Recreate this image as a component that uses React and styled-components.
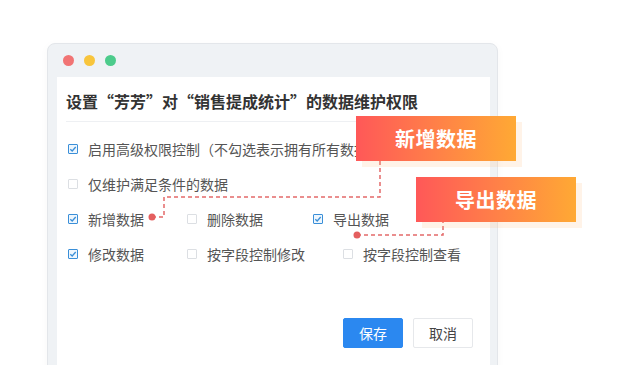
import React from "react";
import styled, { createGlobalStyle } from "styled-components";

const GlobalStyle = createGlobalStyle`
    html, body {
        margin: 0;
        padding: 0;
        background: #ffffff;
        font-family: "Noto Sans CJK SC", "Noto Sans", sans-serif;
    }
`;

const Page = styled.div`
    position: relative;
    width: 630px;
    height: 365px;
    overflow: hidden;
    padding: 43px 0 0 47px;
    box-sizing: border-box;
`;

const Window = styled.div`
    width: 451px;
    height: 340px;
    box-sizing: border-box;
    background: #eff2f5;
    border: 1px solid #e3e6ea;
    border-radius: 8px 8px 0 0;
    box-shadow: 0 2px 10px rgba(0, 0, 0, 0.03);
    display: flex;
    flex-direction: column;
    padding: 0 7px 0 9px;
`;

const TitleBar = styled.div`
    height: 33px;
    display: flex;
    align-items: center;
    gap: 10px;
    padding-left: 6px;
`;

const Dot = styled.span`
    width: 11px;
    height: 11px;
    border-radius: 50%;
    background: ${(p) => p.color};
`;

const Panel = styled.div`
    flex: 1;
    background: #ffffff;
    padding: 0 17px 0 9px;
    overflow: hidden;
`;

const Title = styled.div`
    font-size: 16px;
    font-weight: bold;
    color: #333333;
    line-height: 20px;
    padding: 14px 0 10px;
    border-bottom: 1px solid #eef0f3;
    white-space: nowrap;
`;

const List = styled.div`
    padding: 9px 0 0 2px;
`;

const Row = styled.div`
    height: 35px;
    display: flex;
    align-items: center;
    white-space: nowrap;
`;

const Item = styled.label`
    display: flex;
    align-items: center;
    flex: none;
    width: ${(p) => (p.w ? `${p.w}px` : "auto")};
    overflow: hidden;
    font-size: 14px;
    color: #555555;
`;

const Box = styled.span`
    flex: none;
    width: 10px;
    height: 10px;
    box-sizing: border-box;
    margin-right: 10px;
    border: 1px solid ${(p) => (p.checked ? "#3a8fd8" : "#dcdfe3")};
    background: ${(p) => (p.checked ? "#eef6fd" : "#fff")};
    border-radius: 1px;
    display: flex;
    align-items: center;
    justify-content: center;
`;

const Footer = styled.div`
    display: flex;
    justify-content: flex-end;
    gap: 10px;
    margin-top: 47px;
`;

const Button = styled.button`
    width: 60px;
    height: 30px;
    border-radius: 2px;
    font-family: inherit;
    font-size: 14px;
    border: 1px solid ${(p) => (p.primary ? "#2b88f0" : "#e6e8eb")};
    background: ${(p) => (p.primary ? "#2b88f0" : "#ffffff")};
    color: ${(p) => (p.primary ? "#ffffff" : "#444444")};
    padding: 0;
`;

const Callout = styled.div`
    position: absolute;
    left: ${(p) => p.x}px;
    top: ${(p) => p.y}px;
    width: 160px;
    height: 45px;
    display: flex;
    align-items: center;
    justify-content: center;
    background: linear-gradient(90deg, #ff5858 0%, #ff8048 50%, #ffa934 100%);
    color: #ffffff;
    font-size: 20px;
    font-weight: bold;
    letter-spacing: 0.5px;
    box-shadow: 6px 6px 0 rgba(255, 190, 130, 0.18);
`;

const Lines = styled.svg`
    position: absolute;
    left: 0;
    top: 0;
    pointer-events: none;
`;

const Check = ({ checked }) => (
    <Box checked={checked}>
        {checked && (
            <svg width="8" height="8" viewBox="0 0 8 8">
                <path d="M1.3 4.2 L3.2 6 L6.7 2" fill="none" stroke="#3a8fd8" strokeWidth="1.3" />
            </svg>
        )}
    </Box>
);

const rows = [
    [{ text: "启用高级权限控制（不勾选表示拥有所有数据的维护权限）", checked: true, w: 288 }],
    [{ text: "仅维护满足条件的数据", checked: false }],
    [
        { text: "新增数据", checked: true, w: 119 },
        { text: "删除数据", checked: false, w: 126 },
        { text: "导出数据", checked: true },
    ],
    [
        { text: "修改数据", checked: true, w: 119 },
        { text: "按字段控制修改", checked: false, w: 156 },
        { text: "按字段控制查看", checked: false },
    ],
];

export default function App() {
    return (
        <>
            <GlobalStyle />
            <Page>
                <Window>
                    <TitleBar>
                        <Dot color="#f17474" />
                        <Dot color="#f8c53c" />
                        <Dot color="#4ccb8b" />
                    </TitleBar>
                    <Panel>
                        <Title>设置“芳芳”对“销售提成统计”的数据维护权限</Title>
                        <List>
                            {rows.map((row, i) => (
                                <Row key={i}>
                                    {row.map((it) => (
                                        <Item key={it.text} w={it.w}>
                                            <Check checked={it.checked} />
                                            {it.text}
                                        </Item>
                                    ))}
                                </Row>
                            ))}
                        </List>
                        <Footer>
                            <Button primary>保存</Button>
                            <Button>取消</Button>
                        </Footer>
                    </Panel>
                </Window>
                <Lines width="630" height="365">
                    <path d="M152 217 H164 V197 H380 V161" fill="none" stroke="#e46a6a" strokeWidth="1.5" strokeDasharray="4 3" />
                    <circle cx="152" cy="217" r="3.5" fill="#e45f5f" />
                    <path d="M357 235 H443 V222" fill="none" stroke="#e46a6a" strokeWidth="1.5" strokeDasharray="4 3" />
                    <circle cx="357" cy="235" r="3.5" fill="#e45f5f" />
                </Lines>
                <Callout x={356} y={116}>新增数据</Callout>
                <Callout x={416} y={177}>导出数据</Callout>
            </Page>
        </>
    );
}
